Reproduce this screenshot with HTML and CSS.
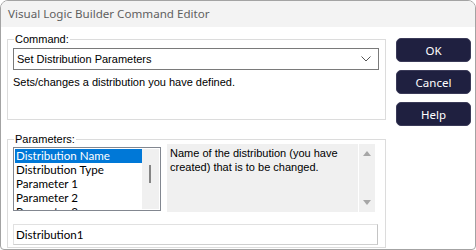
FILE: index.html
```html
<!DOCTYPE html>
<html>
<head>
<meta charset="utf-8">
<link rel="stylesheet" href="styles.css">
</head>
<body>
<div class="window">
  <div class="titlebar">Visual Logic Builder Command Editor</div>
  <div class="content">
    <div class="main">
      <fieldset class="group group-command">
        <legend>Command:</legend>
        <div class="combo">
          <span>Set Distribution Parameters</span>
          <svg class="chev" width="10" height="6" viewBox="0 0 10 6"><path d="M0.5 0.5 L5 5 L9.5 0.5" fill="none" stroke="#555" stroke-width="1"/></svg>
        </div>
        <div class="desc">Sets/changes a distribution you have defined.</div>
      </fieldset>
      <fieldset class="group group-params">
        <legend>Parameters:</legend>
        <div class="params-row">
          <div class="listbox">
            <ul class="items">
              <li class="sel">Distribution Name</li>
              <li>Distribution Type</li>
              <li>Parameter 1</li>
              <li>Parameter 2</li>
              <li>Parameter 3</li>
            </ul>
            <div class="lscroll"><div class="thumb"></div></div>
          </div>
          <div class="help">
            <div class="help-text">Name of the distribution (you have created) that is to be changed.</div>
            <div class="hscroll">
              <svg width="8" height="5" viewBox="0 0 8 5"><path d="M4 0 L8 5 L0 5 Z" fill="#a6a6a6"/></svg>
              <svg width="8" height="5" viewBox="0 0 8 5"><path d="M0 0 L8 0 L4 5 Z" fill="#a6a6a6"/></svg>
            </div>
          </div>
        </div>
        <div class="field">Distribution1</div>
      </fieldset>
    </div>
    <div class="buttons">
      <button class="btn">OK</button>
      <button class="btn">Cancel</button>
      <button class="btn">Help</button>
    </div>
  </div>
</div>
</body>
</html>
```
FILE: styles.css
```css
html, body {
  margin: 0;
  padding: 0;
  background: #ffffff;
}
.window {
  width: 476px;
  height: 250px;
  box-sizing: border-box;
  border: 1px solid #a3a3a3;
  border-radius: 8px 8px 4px 4px;
  overflow: hidden;
  background: #ffffff;
  display: flex;
  flex-direction: column;
}
.titlebar {
  height: 26px;
  flex: none;
  background: #f3f3f3;
  color: #5f5f5f;
  font-family: "Noto Sans", sans-serif;
  font-size: 11.6px;
  line-height: 26px;
  padding-left: 7px;
  box-sizing: border-box;
}
.content {
  display: flex;
  flex: 1;
  padding-left: 6px;
}
.main {
  width: 379px;
  display: flex;
  flex-direction: column;
}
.group {
  margin: 0;
  border: 1px solid #dcdcdc;
  padding: 0 0 0 5px;
  font-family: "Liberation Sans", Arial, sans-serif;
  font-size: 11px;
  color: #000;
}
.group legend {
  padding: 0 1px;
  margin-left: 1px;
  font-family: "Liberation Sans", Arial, sans-serif;
  font-size: 11px;
  line-height: 13px;
  color: #000;
}
.group-command {
  margin-top: 6px;
  height: 87px;
  box-sizing: border-box;
}
.combo {
  margin-top: 2px;
  width: 366px;
  height: 22px;
  box-sizing: border-box;
  border: 1px solid #7a7a7a;
  display: flex;
  align-items: center;
  justify-content: space-between;
  padding: 0 7px 0 3px;
  font-size: 11px;
}
.chev {
  display: block;
}
.desc {
  margin-top: 6px;
  font-size: 11px;
  line-height: 13px;
}
.group-params {
  margin-top: 13px;
  height: 115px;
  box-sizing: border-box;
}
.params-row {
  display: flex;
  margin-top: -2px;
  gap: 6px;
  align-items: flex-start;
}
.listbox {
  margin-top: 3px;
  width: 148px;
  height: 64px;
  box-sizing: border-box;
  border: 1px solid #828790;
  display: flex;
  padding: 1px;
  overflow: hidden;
}
.items {
  list-style: none;
  margin: 0;
  padding: 0;
  width: 127px;
  font-family: Lato, sans-serif;
  font-size: 11.6px;
}
.items li {
  height: 14px;
  line-height: 14px;
  padding-left: 1px;
  white-space: nowrap;
}
.items li.sel {
  background: #0078d7;
  color: #ffffff;
}
.lscroll {
  width: 17px;
  background: #f0f0f0;
}
.thumb {
  width: 2px;
  height: 18px;
  background: #858585;
  margin: 16px 0 0 7px;
}
.help {
  width: 208px;
  height: 68px;
  background: #f0f0f0;
  display: flex;
}
.help-text {
  flex: 1;
  padding: 2px 3px;
  font-size: 11px;
  line-height: 14px;
  border-right: 1px solid #ffffff;
}
.hscroll {
  width: 16px;
  display: flex;
  flex-direction: column;
  align-items: center;
  justify-content: space-between;
  padding: 7px 0 7px;
}
.hscroll svg {
  display: block;
}
.field {
  margin-top: 12px;
  width: 365px;
  height: 21px;
  box-sizing: border-box;
  border: 1px solid #e1e1e1;
  border-right-color: #c4c4c4;
  border-bottom-color: #cfcfcf;
  font-family: Lato, sans-serif;
  font-size: 11.6px;
  line-height: 19px;
  padding-left: 2px;
}
.buttons {
  display: flex;
  flex-direction: column;
  gap: 8px;
  padding-top: 11px;
  margin-left: 10px;
}
.btn {
  width: 75px;
  height: 24px;
  border: 1px solid #3a3a58;
  border-radius: 5px;
  background: #1f2040;
  color: #ffffff;
  font-family: "Noto Sans", sans-serif;
  font-size: 11.5px;
  padding: 0;
}
```
